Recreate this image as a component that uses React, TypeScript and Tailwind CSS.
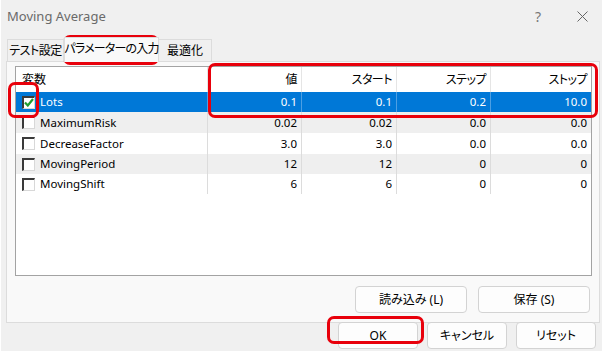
import React from 'react';

const rows = [
  { name: 'Lots', vals: ['0.1', '0.1', '0.2', '10.0'], h: 'h-[20px]', checked: true },
  { name: 'MaximumRisk', vals: ['0.02', '0.02', '0.0', '0.0'], h: 'h-[21px]' },
  { name: 'DecreaseFactor', vals: ['3.0', '3.0', '0.0', '0.0'], h: 'h-[21px]' },
  { name: 'MovingPeriod', vals: ['12', '12', '0', '0'], h: 'h-[20px]' },
  { name: 'MovingShift', vals: ['6', '6', '0', '0'], h: 'h-[20px]' },
];

const cols = 'grid grid-cols-[191px_94px_95px_94px_1fr]';

function CheckBox({ checked }: { checked?: boolean }) {
  return (
    <span className="flex h-[13px] w-[13px] shrink-0 items-center justify-center border-t-2 border-l-2 border-r border-b border-t-[#3a3a3a] border-l-[#3a3a3a] border-r-[#d8d8d8] border-b-[#d8d8d8] bg-white">
      {checked && (
        <svg width="10" height="9" viewBox="0 0 10 9">
          <path d="M1 4.5 L3.8 7.5 L9 1" stroke="#1f9d2f" strokeWidth="2.2" fill="none" />
        </svg>
      )}
    </span>
  );
}

function Btn({ label, w }: { label: string; w: string }) {
  return (
    <button className={`${w} h-[27px] rounded-[4px] border border-[#d3d3d3] bg-[#fdfdfd] text-[12px] text-black`}>
      {label}
    </button>
  );
}

function RedBox({ c }: { c: string }) {
  return <div className={`pointer-events-none absolute rounded-[7px] border-[3px] border-[#e8000b] ${c}`} />;
}

export default function App() {
  return (
    <div className="relative h-[356px] w-[602px] bg-white text-[12px] text-black [font-family:'Noto_Sans','Noto_Sans_CJK_JP',sans-serif] [font-feature-settings:'palt']">
      <div className="ml-[1px] flex h-[351px] flex-col bg-[#f0f0f0]">
        {/* title bar */}
        <div className="flex h-[33px] items-center pl-[6px] pr-[14px] text-[13px] text-[#6a6a6a]">
          <span>Moving Average</span>
          <span className="ml-auto mr-[36px] text-[14px] text-[#777]">?</span>
          <svg width="11" height="11" viewBox="0 0 11 11">
            <path d="M0.5 0.5 L10.5 10.5 M10.5 0.5 L0.5 10.5" stroke="#666" strokeWidth="1" />
          </svg>
        </div>

        {/* tabs */}
        <div className="relative z-10 flex h-[28px] items-end whitespace-nowrap pl-[6px]">
          <div className="flex h-[22px] w-[57px] items-center justify-center border border-b-0 border-[#dcdcdc] bg-[#f0f0f0] tracking-[-0.5px]">
            テスト設定
          </div>
          <div className="-mb-px flex h-[25px] w-[95px] items-center justify-center border border-b-0 border-[#dcdcdc] bg-[#f9f9f9] pb-[2px] tracking-[-0.8px]">
            パラメーターの入力
          </div>
          <div className="flex h-[22px] w-[53px] items-center justify-center border border-b-0 border-l-0 border-[#dcdcdc] bg-[#f0f0f0]">
            最適化
          </div>
        </div>

        {/* panel */}
        <div className="ml-[5px] flex h-[262px] w-[594px] flex-col border border-[#dcdcdc] bg-[#f9f9f9]">
          <div className="ml-[8px] mt-[4px] flex h-[210px] w-[577px] flex-col border border-[#a3a3a3] bg-white">
            <div className={`${cols} h-[25px] items-center`}>
              <div className="pl-[6px]">変数</div>
              {['値', 'スタート', 'ステップ', 'ストップ'].map((h) => (
                <div key={h} className="flex h-full items-center justify-end border-l border-[#e5e5e5] pr-[4px] tracking-[-0.5px]">
                  {h}
                </div>
              ))}
            </div>
            {rows.map((r, i) => {
              const sel = r.checked;
              const bg = sel ? 'bg-[#0078d7] text-white' : i % 2 === 0 ? 'bg-white' : 'bg-[#efefef]';
              const line = sel ? 'border-[#4d9fe3]' : 'border-[#dcdcdc]';
              return (
                <div key={r.name} className={`${cols} ${r.h} items-center text-[11.5px] ${bg}`}>
                  <div className="flex items-center gap-[5px] pl-[6px]">
                    <CheckBox checked={r.checked} />
                    <span>{r.name}</span>
                  </div>
                  {r.vals.map((v, j) => (
                    <div key={j} className={`flex h-full items-center justify-end border-l pr-[4px] ${line}`}>
                      {v}
                    </div>
                  ))}
                </div>
              );
            })}
          </div>

          <div className="mt-[10px] flex justify-end gap-[11px] pr-[9px]">
            <Btn label="読み込み (L)" w="w-[112px]" />
            <Btn label="保存 (S)" w="w-[112px]" />
          </div>
        </div>

        {/* bottom buttons */}
        <div className="-mt-px flex justify-end gap-[9px] pr-[6px]">
          <Btn label="OK" w="w-[80px]" />
          <Btn label="キャンセル" w="w-[80px]" />
          <Btn label="リセット" w="w-[80px]" />
        </div>
      </div>

      <RedBox c="left-[63px] top-[35px] h-[30px] w-[96px]" />
      <RedBox c="left-[8px] top-[82px] h-[36px] w-[31px]" />
      <RedBox c="left-[208px] top-[63px] h-[55px] w-[390px]" />
      <RedBox c="left-[327px] top-[316px] h-[28px] w-[97px]" />
    </div>
  );
}
